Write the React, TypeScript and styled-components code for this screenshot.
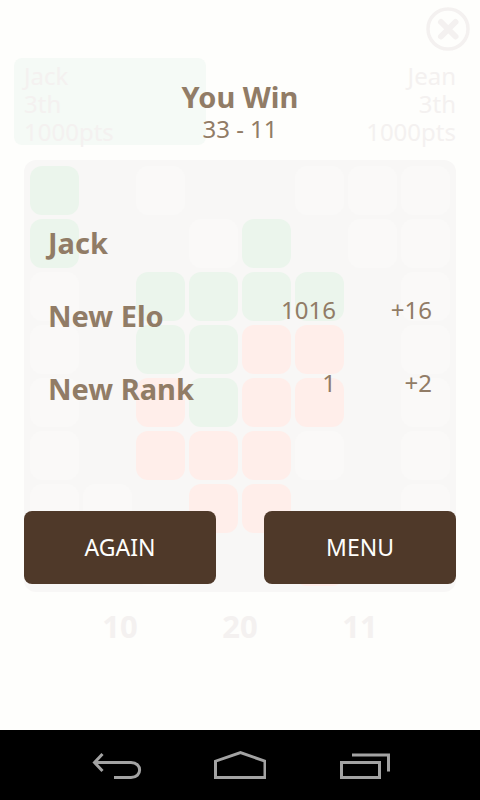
import React from "react";
import styled, { createGlobalStyle } from "styled-components";

const GlobalStyle = createGlobalStyle`
  *, *::before, *::after { box-sizing: border-box; }
  body {
    margin: 0;
    background: #fefefc;
    font-family: "Noto Sans", "Open Sans", sans-serif;
    font-size: 24px;
    line-height: 28px;
    color: #917c66;
  }
  button { font: inherit; border: 0; padding: 0; cursor: pointer; }
`;

const Page = styled.div`
  display: flex;
  flex-direction: column;
  min-height: 100vh;
`;

/* The game and the result layer share one grid cell. */
const Stage = styled.main`
  flex: 1;
  display: grid;
  grid-template-columns: minmax(0, 1fr);
  & > * { grid-area: 1 / 1; }
`;

const Game = styled.section`
  color: #f4f1f0;
`;

const TopBar = styled.div`
  display: flex;
  justify-content: flex-end;
  height: 58px;
  padding: 7px 10px 0 0;
`;

const CloseButton = styled.button`
  width: 44px;
  height: 44px;
  background: none;
  color: inherit;
  svg { display: block; }
`;

const Players = styled.div`
  display: flex;
  justify-content: space-between;
  padding: 0 14px;
`;

const Player = styled.div<{ $active?: boolean; $right?: boolean }>`
  width: 192px;
  height: 87px;
  padding: 4px 10px 0;
  border-radius: 8px;
  background: ${(p) => (p.$active ? "#f5faf6" : "transparent")};
  text-align: ${(p) => (p.$right ? "right" : "left")};
`;

const Board = styled.div`
  display: grid;
  grid-template-columns: repeat(8, 1fr);
  gap: 4px;
  margin: 15px 24px 0;
  padding: 6px;
  border-radius: 12px;
  background: #f8f7f6;
`;

const tileColours: Record<string, string> = {
  G: "#ebf5ec",
  R: "#ffeeea",
  w: "#faf9f8",
  ".": "transparent",
};

const Tile = styled.div<{ $kind: string }>`
  aspect-ratio: 1;
  border-radius: 12px;
  background: ${(p) => tileColours[p.$kind]};
`;

const Counters = styled.div`
  display: grid;
  grid-template-columns: repeat(3, 1fr);
  padding: 14px 60px 0;
  text-align: center;
  font-size: 31px;
  line-height: 40px;
  font-weight: 700;
`;

const Result = styled.section`
  z-index: 1;
  padding: 77px 24px 0;
`;

const Title = styled.h1`
  margin: 0;
  font-size: 29px;
  line-height: 40px;
  text-align: center;
`;

const Score = styled.p`
  margin: 0;
  line-height: 24px;
  text-align: center;
`;

const Stats = styled.table`
  width: 100%;
  margin-top: 84px;
  padding: 0 24px;
  border-spacing: 0;
  table-layout: fixed;
`;

const StatRow = styled.tr`
  height: 73px;
`;

const StatName = styled.th`
  width: 50%;
  padding: 0;
  font-size: 29px;
  line-height: 36px;
  text-align: left;
  vertical-align: top;
`;

const StatValue = styled.td`
  padding: 0;
  line-height: 24px;
  text-align: right;
  vertical-align: top;
`;

const Actions = styled.div`
  display: flex;
  gap: 48px;
  margin-top: 67px;
`;

const ActionButton = styled.button`
  flex: 1;
  height: 73px;
  padding-bottom: 2px;
  border-radius: 8px;
  background: #4f3929;
  color: #fefefc;
  font-size: 23px;
`;

const NavBar = styled.nav`
  display: flex;
  justify-content: center;
  gap: 44px;
  height: 70px;
  background: #000;
`;

const NavButton = styled.button`
  display: grid;
  place-items: center;
  width: 80px;
  background: none;
  color: #a3a3a3;
`;

const rows = [
  "G.w..www",
  "G..wG.ww",
  "w.GGGG.w",
  "w.GGRR.w",
  "w.RGRR.w",
  "w.RRRw.w",
  "ww.RR..w",
  "..w..R..",
];

const stats = [
  { name: "Jack", value: "", change: "" },
  { name: "New Elo", value: "1016", change: "+16" },
  { name: "New Rank", value: "1", change: "+2" },
];

const navItems = [
  {
    label: "Back",
    icon: (
      <>
        <path d="M4 13.500H41C52.500 13.500 52.500 28.500 41 28.500H24" />
        <path d="M12.500 5L4.500 13.500L12.500 22" />
      </>
    ),
  },
  { label: "Home", icon: <path d="M1.500 28.500V12.200L26.500 3.500L51 12.200V28.500Z" /> },
  {
    label: "Recent apps",
    icon: (
      <>
        <path d="M3.500 13.500H41.500V28.500H3.500Z" />
        <path d="M14 6H50.500V22.500" />
      </>
    ),
  },
];

export default function App() {
  return (
    <Page>
      <GlobalStyle />
      <Stage>
        <Game>
          <TopBar>
            <CloseButton aria-label="Close">
              <svg width="44" height="44" viewBox="0 0 44 44" fill="none" stroke="currentColor">
                <circle cx="22" cy="22" r="20" strokeWidth="3.5" />
                <path d="M15 15L29.500 29.500M29.500 15L15 29.500" strokeWidth="6" strokeLinecap="round" />
              </svg>
            </CloseButton>
          </TopBar>
          <Players>
            <Player $active>
              <div>Jack</div>
              <div>3th</div>
              <div>1000pts</div>
            </Player>
            <Player $right>
              <div>Jean</div>
              <div>3th</div>
              <div>1000pts</div>
            </Player>
          </Players>
          <Board>
            {rows.flatMap((row, y) =>
              row.split("").map((kind, x) => <Tile key={`${x}-${y}`} $kind={kind} />)
            )}
          </Board>
          <Counters>
            <span>10</span>
            <span>20</span>
            <span>11</span>
          </Counters>
        </Game>
        <Result>
          <Title>You Win</Title>
          <Score>33 - 11</Score>
          <Stats>
            <tbody>
              {stats.map((s) => (
                <StatRow key={s.name}>
                  <StatName scope="row">{s.name}</StatName>
                  <StatValue>{s.value}</StatValue>
                  <StatValue>{s.change}</StatValue>
                </StatRow>
              ))}
            </tbody>
          </Stats>
          <Actions>
            <ActionButton>AGAIN</ActionButton>
            <ActionButton>MENU</ActionButton>
          </Actions>
        </Result>
      </Stage>
      <NavBar aria-label="System">
        {navItems.map((item) => (
          <NavButton key={item.label} aria-label={item.label}>
            <svg width="52" height="32" viewBox="0 0 52 32" fill="none" stroke="currentColor" strokeWidth="3">
              {item.icon}
            </svg>
          </NavButton>
        ))}
      </NavBar>
    </Page>
  );
}
